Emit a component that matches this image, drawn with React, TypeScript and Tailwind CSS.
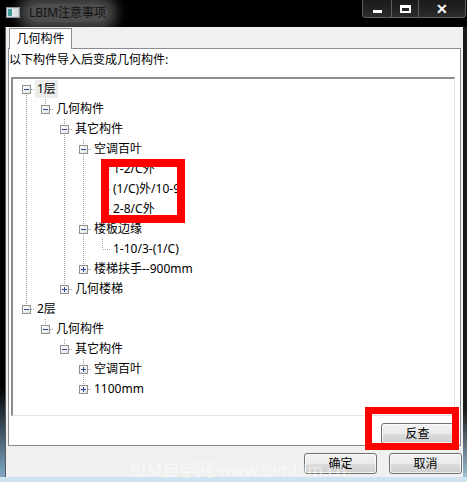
import React from 'react';

type Row = { label: string; level: number; kind: 'minus' | 'plus' | 'leaf'; selected?: boolean };

const rows: Row[] = [
  { label: '1层', level: 0, kind: 'minus', selected: true },
  { label: '几何构件', level: 1, kind: 'minus' },
  { label: '其它构件', level: 2, kind: 'minus' },
  { label: '空调百叶', level: 3, kind: 'minus' },
  { label: '1-2/C外', level: 4, kind: 'leaf' },
  { label: '(1/C)外/10-9', level: 4, kind: 'leaf' },
  { label: '2-8/C外', level: 4, kind: 'leaf' },
  { label: '楼板边缘', level: 3, kind: 'minus' },
  { label: '1-10/3-(1/C)', level: 4, kind: 'leaf' },
  { label: '楼梯扶手--900mm', level: 3, kind: 'plus' },
  { label: '几何楼梯', level: 2, kind: 'plus' },
  { label: '2层', level: 0, kind: 'minus' },
  { label: '几何构件', level: 1, kind: 'minus' },
  { label: '其它构件', level: 2, kind: 'minus' },
  { label: '空调百叶', level: 3, kind: 'plus' },
  { label: '1100mm', level: 3, kind: 'plus' },
];

const indent = ['pl-[9px]', 'pl-[28px]', 'pl-[47px]', 'pl-[66px]', 'pl-[85px]'];

const rowC = (i: number) => 10 + 20 * i;
const colX = (l: number) => 13 + 19 * l;

// vertical connector lines: [x, fromRow, toRow]
const vlines: [number, number, number][] = [
  [colX(0), 0, 11],
  [colX(1), 0, 1],
  [colX(2), 1, 10],
  [colX(3), 2, 9],
  [colX(4), 3, 6],
  [colX(4), 7, 8],
  [colX(1), 11, 12],
  [colX(2), 12, 13],
  [colX(3), 13, 15],
];

function Expander({ kind }: { kind: 'minus' | 'plus' }) {
  return (
    <div className="relative w-[9px] h-[9px] border border-[#919191] bg-[linear-gradient(to_bottom_right,#ffffff,#e2e2e2)] shrink-0">
      <div className="absolute left-[1px] top-[3px] w-[5px] h-[1px] bg-[#2c4a96]" />
      {kind === 'plus' && <div className="absolute left-[3px] top-[1px] w-[1px] h-[5px] bg-[#2c4a96]" />}
    </div>
  );
}

function WinButton({ children }: { children: React.ReactNode }) {
  return (
    <div className="w-[73px] h-[21px] rounded-[3px] border border-[#707070] bg-[linear-gradient(to_bottom,#f2f2f2_0%,#ebebeb_50%,#dddddd_50%,#cfcfcf_100%)] shadow-[inset_0_0_0_1px_rgba(255,255,255,0.75)] flex items-center justify-center text-[12px] text-black">
      {children}
    </div>
  );
}

export default function App() {
  return (
    <div className="relative w-[467px] h-[482px] overflow-hidden bg-black flex flex-col font-['Noto_Sans','Noto_Sans_CJK_SC',sans-serif]">
      {/* title bar */}
      <div className="h-[27px] flex items-start justify-between shrink-0">
        <div className="flex items-center h-[25px] pl-[6px]">
          <svg width="14" height="11" viewBox="0 0 14 11">
            <rect x="0.5" y="0.5" width="13" height="10" fill="#d6dbe0" stroke="#8a96a0" />
            <rect x="2" y="2" width="4" height="7" fill="#3f9c9a" />
            <rect x="6" y="2" width="6" height="7" fill="#eef2f5" />
          </svg>
          <span className="ml-[7px] px-[2px] text-[12px] text-[#141414] rounded-full bg-[rgba(140,140,140,0.55)] shadow-[0_0_12px_9px_rgba(140,140,140,0.5)]">
            LBIM注意事项
          </span>
        </div>
        <div className="flex mr-[1px] h-[18px] rounded-b-[4px] border border-t-0 border-[#5e5e5e] bg-[linear-gradient(to_bottom,#1a1a1a,#2c2c2c)] overflow-hidden">
          <div className="w-[29px] flex items-center justify-center border-r border-[#5e5e5e]">
            <div className="w-[9px] h-[3px] bg-white mt-[5px]" />
          </div>
          <div className="w-[27px] flex items-center justify-center border-r border-[#5e5e5e]">
            <div className="w-[11px] h-[8px] border-2 border-white border-t-[3px]" />
          </div>
          <div className="w-[46px] flex items-center justify-center text-white text-[14px] font-bold">✕</div>
        </div>
      </div>

      {/* middle */}
      <div className="flex flex-1">
        <div className="w-[5px] bg-[linear-gradient(to_bottom,#000000_80%,#7fa9c6)]" />
        <div className="w-[458px] bg-[#f0f0f0] border-l border-[#5a5a5a] flex flex-col">
          {/* tab header */}
          <div className="flex pl-[3px] pt-[1px] relative z-10 -mb-px">
            <div className="w-[63px] h-[21px] bg-white border border-b-0 border-[#898c95] flex items-center justify-center text-[12px] text-black">
              几何构件
            </div>
          </div>
          {/* tab pane */}
          <div className="mx-[2px] h-[398px] bg-white border border-[#898c95] flex flex-col">
            <div className="h-[22px] flex items-center text-[12px] text-black">以下构件导入后变成几何构件:</div>
            <div className="mt-[6px] ml-[2px] mr-[5px] h-[339px] border-t-2 border-l-2 border-t-[#8d8d8d] border-l-[#8d8d8d] border-b border-r border-b-[#e3e3e3] border-r-[#e3e3e3]">
              <div className="relative">
                <svg className="absolute left-0 top-0" width="440" height="336">
                  <g stroke="#a0a0a0" strokeWidth="1" strokeDasharray="1 1">
                    {vlines.map(([x, a, b], i) => (
                      <line key={'v' + i} x1={x + 0.5} x2={x + 0.5} y1={a === 0 && x === colX(0) ? rowC(a) : rowC(a) + 10} y2={rowC(b)} />
                    ))}
                    {rows.map((r, i) => (
                      <line key={'h' + i} x1={colX(r.level) + 1} x2={colX(r.level) + 9} y1={rowC(i) + 0.5} y2={rowC(i) + 0.5} />
                    ))}
                  </g>
                </svg>
                {rows.map((r, i) => (
                  <div key={i} className={`relative h-[20px] flex items-center ${indent[r.level]}`}>
                    {r.kind === 'leaf' ? <div className="w-[9px] shrink-0" /> : <Expander kind={r.kind} />}
                    <span
                      className={`ml-[4px] px-[2px] h-[18px] flex items-center text-[12px] text-black whitespace-nowrap ${
                        r.selected ? 'bg-[#ececec]' : ''
                      }`}
                    >
                      {r.label}
                    </span>
                  </div>
                ))}
              </div>
            </div>
            <div className="mt-[7px] flex justify-end pr-[6px]">
              <WinButton>反查</WinButton>
            </div>
          </div>
          {/* bottom buttons */}
          <div className="mt-[7px] flex justify-end gap-[12px] pr-[1px]">
            <WinButton>确定</WinButton>
            <WinButton>取消</WinButton>
          </div>
        </div>
        <div className="w-[4px] bg-[linear-gradient(to_bottom,#1a1a1a_85%,#9fc0d6)]" />
      </div>
      <div className="h-[5px] shrink-0 bg-[#cfe2ef]" />

      {/* annotations */}
      <div className="absolute left-[101px] top-[159px] w-[84px] h-[64px] border-[8px] border-[#ff0000]" />
      <div className="absolute left-[365px] top-[407px] w-[94px] h-[43px] border-[7px] border-[#ff0000]" />
      <div className="absolute left-[130px] top-[460px] text-[17px] leading-[20px] text-white/50 whitespace-nowrap">
        BIM自学网 www.bimbim.cn
      </div>
    </div>
  );
}
